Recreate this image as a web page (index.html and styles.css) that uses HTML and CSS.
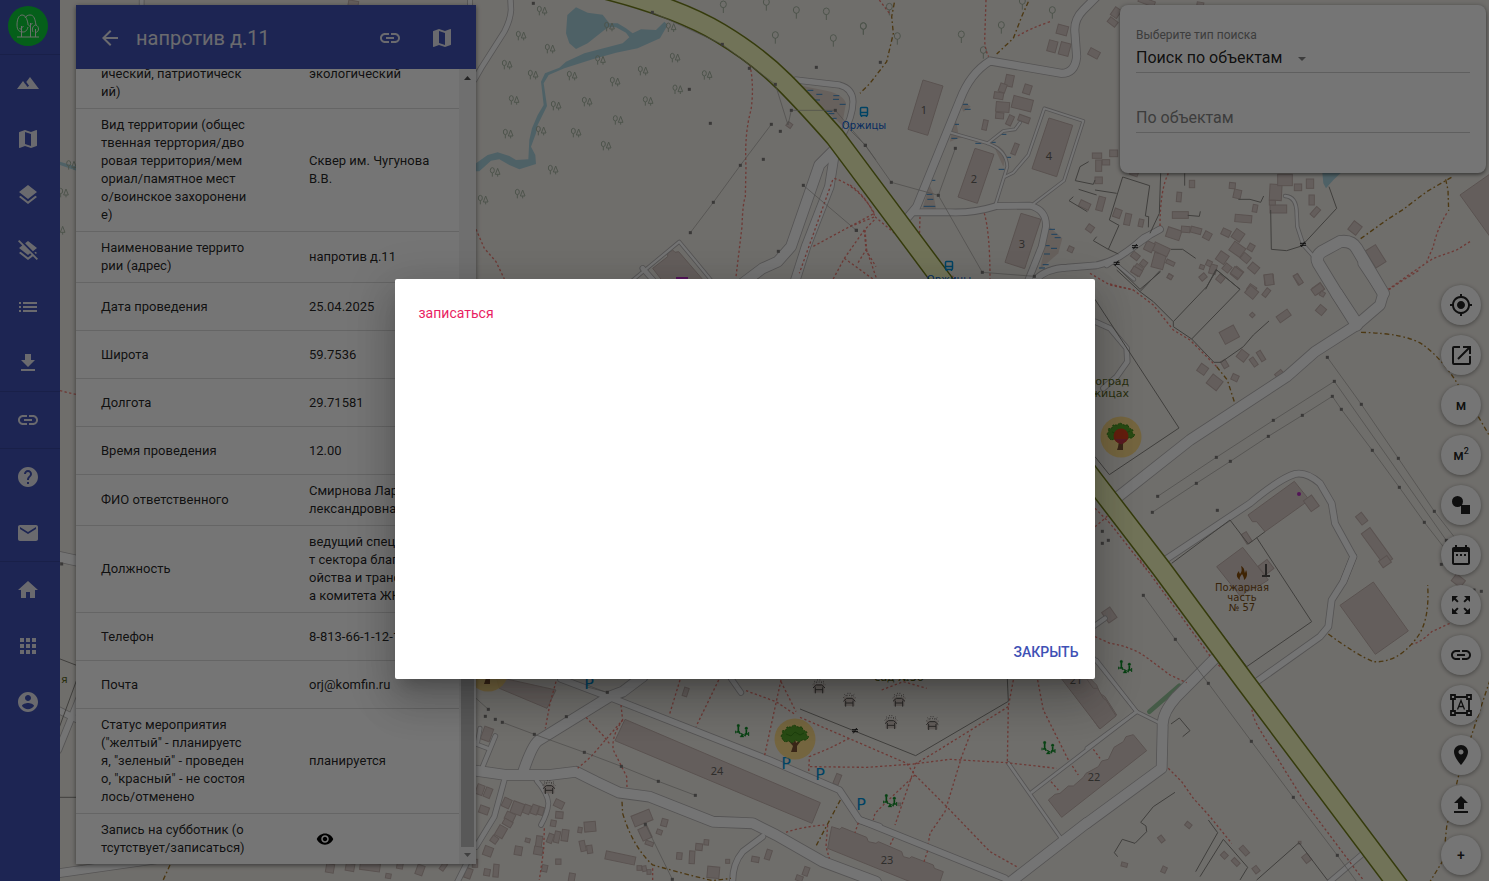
FILE: index.html
```html
<!DOCTYPE html>
<html lang="ru">
<head>
<meta charset="utf-8">
<title>Карта субботников</title>
<link rel="stylesheet" href="styles.css">
</head>
<body>
<svg class="sprite" aria-hidden="true">
  <symbol id="i-terrain" viewBox="0 0 24 24"><path d="M14 6l-3.75 5 2.85 3.8-1.6 1.2C9.81 13.75 7 10 7 10l-6 8h22L14 6z"/></symbol>
  <symbol id="i-map" viewBox="0 0 24 24"><path d="M20.5 3l-.16.03L15 5.1 9 3 3.36 4.9c-.21.07-.36.25-.36.48V20.5c0 .28.22.5.5.5l.16-.03L9 18.9l6 2.1 5.64-1.9c.21-.07.36-.25.36-.48V3.5c0-.28-.22-.5-.5-.5zM15 19l-6-2.11V5l6 2.11V19z"/></symbol>
  <symbol id="i-layers" viewBox="0 0 24 24"><path d="M11.99 18.54l-7.37-5.73L3 14.07l9 7 9-7-1.63-1.27-7.38 5.74zM12 16l7.36-5.73L21 9l-9-7-9 7 1.63 1.27L12 16z"/></symbol>
  <symbol id="i-layers-off" viewBox="0 0 24 24"><path d="M19.81 14.99l1.19-.92-1.43-1.43-1.19.92 1.43 1.43zm-.45-4.72L21 9l-9-7-2.91 2.27 7.87 7.88 2.4-1.88zM3.27 1L2 2.27l4.22 4.22L3 9l1.63 1.27L12 16l2.1-1.63 1.43 1.43L12 18.54l-7.37-5.73L3 14.07l9 7 4.95-3.85L20.73 21 22 19.73 3.27 1z"/></symbol>
  <symbol id="i-list" viewBox="0 0 24 24"><path d="M3 13h2v-2H3v2zm0 4h2v-2H3v2zm0-8h2V7H3v2zm4 4h14v-2H7v2zm0 4h14v-2H7v2zM7 7v2h14V7H7z"/></symbol>
  <symbol id="i-download" viewBox="0 0 24 24"><path d="M19 9h-4V3H9v6H5l7 7 7-7zM5 18v2h14v-2H5z"/></symbol>
  <symbol id="i-link" viewBox="0 0 24 24"><path d="M3.9 12c0-1.71 1.39-3.1 3.1-3.1h4V7H7c-2.76 0-5 2.24-5 5s2.24 5 5 5h4v-1.9H7c-1.71 0-3.1-1.39-3.1-3.1zM8 13h8v-2H8v2zm9-6h-4v1.9h4c1.71 0 3.1 1.39 3.1 3.1s-1.39 3.1-3.1 3.1h-4V17h4c2.76 0 5-2.24 5-5s-2.24-5-5-5z"/></symbol>
  <symbol id="i-help" viewBox="0 0 24 24"><path d="M12 2C6.48 2 2 6.48 2 12s4.48 10 10 10 10-4.48 10-10S17.52 2 12 2zm1 17h-2v-2h2v2zm2.07-7.75l-.9.92C13.45 12.9 13 13.5 13 15h-2v-.5c0-1.1.45-2.1 1.17-2.83l1.24-1.26c.37-.36.59-.86.59-1.41 0-1.1-.9-2-2-2s-2 .9-2 2H8c0-2.21 1.79-4 4-4s4 1.79 4 4c0 .88-.36 1.68-.93 2.25z"/></symbol>
  <symbol id="i-mail" viewBox="0 0 24 24"><path d="M20 4H4c-1.1 0-1.99.9-1.99 2L2 18c0 1.1.9 2 2 2h16c1.1 0 2-.9 2-2V6c0-1.1-.9-2-2-2zm0 4l-8 5-8-5V6l8 5 8-5v2z"/></symbol>
  <symbol id="i-home" viewBox="0 0 24 24"><path d="M10 20v-6h4v6h5v-8h3L12 3 2 12h3v8z"/></symbol>
  <symbol id="i-apps" viewBox="0 0 24 24"><path d="M4 8h4V4H4v4zm6 12h4v-4h-4v4zm-6 0h4v-4H4v4zm0-6h4v-4H4v4zm6 0h4v-4h-4v4zm6-10v4h4V4h-4zm-6 4h4V4h-4v4zm6 6h4v-4h-4v4zm0 6h4v-4h-4v4z"/></symbol>
  <symbol id="i-account" viewBox="0 0 24 24"><path d="M12 2C6.48 2 2 6.48 2 12s4.48 10 10 10 10-4.48 10-10S17.52 2 12 2zm0 3c1.66 0 3 1.34 3 3s-1.34 3-3 3-3-1.34-3-3 1.34-3 3-3zm0 14.2c-2.5 0-4.71-1.28-6-3.22.03-1.99 4-3.08 6-3.08 1.99 0 5.97 1.09 6 3.08-1.29 1.94-3.5 3.22-6 3.22z"/></symbol>
  <symbol id="i-back" viewBox="0 0 24 24"><path d="M20 11H7.83l5.59-5.59L12 4l-8 8 8 8 1.41-1.41L7.83 13H20v-2z"/></symbol>
  <symbol id="i-eye" viewBox="0 0 24 24"><path d="M12 4.5C7 4.5 2.73 7.61 1 12c1.73 4.39 6 7.5 11 7.5s9.27-3.11 11-7.5c-1.73-4.39-6-7.5-11-7.5zM12 17c-2.76 0-5-2.24-5-5s2.24-5 5-5 5 2.24 5 5-2.24 5-5 5zm0-8c-1.66 0-3 1.34-3 3s1.34 3 3 3 3-1.34 3-3-1.34-3-3-3z"/></symbol>
  <symbol id="i-locate" viewBox="0 0 24 24"><path d="M12 8c-2.21 0-4 1.79-4 4s1.79 4 4 4 4-1.79 4-4-1.79-4-4-4zm8.94 3c-.46-4.17-3.77-7.48-7.94-7.94V1h-2v2.06C6.83 3.52 3.52 6.83 3.06 11H1v2h2.06c.46 4.17 3.77 7.48 7.94 7.94V23h2v-2.06c4.17-.46 7.48-3.77 7.94-7.94H23v-2h-2.06zM12 19c-3.87 0-7-3.13-7-7s3.13-7 7-7 7 3.13 7 7-3.13 7-7 7z"/></symbol>
  <symbol id="i-open" viewBox="0 0 24 24"><path fill="none" stroke="currentColor" stroke-width="2" d="M11 4H5a1 1 0 0 0-1 1v15a1 1 0 0 0 1 1h15a1 1 0 0 0 1-1v-7M9 16L20 5M14 4h7v7"/></symbol>
  <symbol id="i-shapes" viewBox="0 0 24 24"><circle cx="8.500" cy="8.500" r="5.500"/><path d="M12 12h9v9h-9z"/></symbol>
  <symbol id="i-calendar" viewBox="0 0 24 24"><path fill-rule="evenodd" d="M6 2h2v2h8V2h2v2h1c1.100 0 2 .9 2 2v14c0 1.100-.9 2-2 2H5c-1.100 0-2-.9-2-2V6c0-1.100.9-2 2-2h1V2zM5 9v11h14V9H5zM7 11h2v2H7v-2zm4 0h2v2h-2v-2zm4 0h2v2h-2v-2z"/></symbol>
  <symbol id="i-expand" viewBox="0 0 24 24"><path d="M15 3l2.300 2.300-2.890 2.870 1.420 1.420L18.700 6.700 21 9V3h-6zM3 9l2.300-2.300 2.870 2.890 1.420-1.420L6.700 5.300 9 3H3v6zm6 12l-2.300-2.300 2.890-2.870-1.420-1.420L5.300 17.300 3 15v6h6zm12-6l-2.300 2.300-2.870-2.890-1.420 1.420 2.890 2.870L15 21h6v-6z"/></symbol>
  <symbol id="i-frame" viewBox="0 0 24 24"><path fill="none" stroke="currentColor" stroke-width="1.800" d="M2 2h4v4H2zM18 2h4v4h-4zM2 18h4v4H2zM18 18h4v4h-4zM6 4h12M6 20h12M4 6v12M20 6v12"/><path fill="none" stroke="currentColor" stroke-width="1.300" d="M8.500 16.500l3.500-9 3.500 9M9.700 13.500h4.600"/></symbol>
  <symbol id="i-place" viewBox="0 0 24 24"><path d="M12 2C8.130 2 5 5.130 5 9c0 5.250 7 13 7 13s7-7.750 7-13c0-3.870-3.130-7-7-7zm0 9.500c-1.380 0-2.500-1.120-2.500-2.500s1.120-2.500 2.500-2.500 2.500 1.120 2.500 2.500-1.120 2.500-2.500 2.500z"/></symbol>
  <symbol id="i-upload" viewBox="0 0 24 24"><path d="M9 16h6v-6h4l-7-7-7 7h4zm-4 2h14v2H5z"/></symbol>
</svg>

<main class="map">
  <svg id="map" class="map-canvas" viewBox="0 0 1489 881" preserveAspectRatio="xMidYMid slice" role="img" aria-label="Карта"></svg>
</main>

<nav class="rail" aria-label="Меню">
  <a class="logo" href="#" aria-label="Главная">
    <svg viewBox="0 0 40 40"><circle cx="20" cy="20" r="20" fill="#0ccf39"/><g fill="none" stroke="#e4f4e6" stroke-width="1"><path d="M9 31h22M13.500 31V20M13.500 24l-2-2M13.500 22l2-2M22.500 31V17M22.500 21l-3-3M22.500 19l2-2M27.500 31V23M20 21c-1 4-3 5-5 5-4 0-6-2-6-7 0-6 2-10 5-10 3 0 5 3 6 9M17 12c1-2 3-3 5-3 4 0 5 4 6 10M25 26c-1-2-1-6 2.500-7 4 1 4 7 0 7.500"/></g></svg>
  </a>
  <hr>
  <button aria-label="Рельеф"><svg class="icon"><use href="#i-terrain"/></svg></button>
  <button aria-label="Карта"><svg class="icon"><use href="#i-map"/></svg></button>
  <button aria-label="Слои"><svg class="icon"><use href="#i-layers"/></svg></button>
  <button aria-label="Скрыть слои"><svg class="icon"><use href="#i-layers-off"/></svg></button>
  <button aria-label="Список"><svg class="icon"><use href="#i-list"/></svg></button>
  <button aria-label="Скачать"><svg class="icon"><use href="#i-download"/></svg></button>
  <hr>
  <button aria-label="Ссылка"><svg class="icon"><use href="#i-link"/></svg></button>
  <hr>
  <button aria-label="Помощь"><svg class="icon"><use href="#i-help"/></svg></button>
  <button aria-label="Письмо"><svg class="icon"><use href="#i-mail"/></svg></button>
  <hr>
  <button aria-label="Домой"><svg class="icon"><use href="#i-home"/></svg></button>
  <button aria-label="Приложения"><svg class="icon"><use href="#i-apps"/></svg></button>
  <button aria-label="Профиль"><svg class="icon"><use href="#i-account"/></svg></button>
</nav>

<section class="panel">
  <header class="panel-head">
    <button aria-label="Назад"><svg class="icon"><use href="#i-back"/></svg></button>
    <h1>напротив д.11</h1>
    <button aria-label="Ссылка"><svg class="icon"><use href="#i-link"/></svg></button>
    <button aria-label="Показать на карте"><svg class="icon"><use href="#i-map"/></svg></button>
  </header>
  <div class="panel-body">
    <div class="panel-scroll">
      <table>
        <tbody>
          <tr><th>&nbsp;<br>ический, патриотическ<br>ий)</th><td>экологический</td></tr>
          <tr><th>Вид территории (общес<br>твенная терртория/дво<br>ровая территория/мем<br>ориал/памятное мест<br>о/воинское захоронени<br>е)</th><td>Сквер им. Чугунова<br>В.В.</td></tr>
          <tr><th>Наименование террито<br>рии (адрес)</th><td>напротив д.11</td></tr>
          <tr><th>Дата проведения</th><td>25.04.2025</td></tr>
          <tr><th>Широта</th><td>59.7536</td></tr>
          <tr><th>Долгота</th><td>29.71581</td></tr>
          <tr><th>Время проведения</th><td>12.00</td></tr>
          <tr><th>ФИО ответственного</th><td>Смирнова Лариса А<br>лександровна</td></tr>
          <tr><th>Должность</th><td>ведущий специалис<br>т сектора благоустр<br>ойства и транспорт<br>а комитета ЖКХ</td></tr>
          <tr><th>Телефон</th><td>8-813-66-1-12-10</td></tr>
          <tr><th>Почта</th><td>orj@komfin.ru</td></tr>
          <tr><th>Статус мероприятия<br>("желтый" - планируетс<br>я, "зеленый" - проведен<br>о, "красный" - не состоя<br>лось/отменено</th><td>планируется</td></tr>
          <tr><th>Запись на субботник (о<br>тсутствует/записаться)</th><td><button class="eye" aria-label="Открыть запись"><svg><use href="#i-eye"/></svg></button></td></tr>
        </tbody>
      </table>
    </div>
    <div class="scrollbar" aria-hidden="true">
      <svg viewBox="0 0 17 17"><path d="M5 11h7L8.500 7z" fill="#505050"/></svg>
      <span class="thumb"></span>
      <svg viewBox="0 0 17 17"><path d="M5 6h7L8.500 10z" fill="#8b8b8b"/></svg>
    </div>
  </div>
</section>

<form class="search">
  <label class="search-label" for="kind">Выберите тип поиска</label>
  <div class="field">
    <select id="kind"><option>Поиск по объектам</option></select>
    <svg class="caret" viewBox="0 0 8 4" aria-hidden="true"><path d="M0 0h8L4 4z"/></svg>
  </div>
  <input class="field query" type="text" placeholder="По объектам" aria-label="По объектам">
</form>

<div class="tools">
  <button type="button" aria-label="Моё местоположение"><svg class="icon"><use href="#i-locate"/></svg></button>
  <button type="button" aria-label="Открыть"><svg class="icon"><use href="#i-open"/></svg></button>
  <button type="button">м</button>
  <button type="button"><span>м<sup>2</sup></span></button>
  <button type="button" aria-label="Фигуры"><svg class="icon"><use href="#i-shapes"/></svg></button>
  <button type="button" aria-label="Календарь"><svg class="icon"><use href="#i-calendar"/></svg></button>
  <button type="button" aria-label="Развернуть"><svg class="icon"><use href="#i-expand"/></svg></button>
  <button type="button" aria-label="Ссылка"><svg class="icon"><use href="#i-link"/></svg></button>
  <button type="button" aria-label="Область"><svg class="icon"><use href="#i-frame"/></svg></button>
  <button type="button" aria-label="Метка"><svg class="icon"><use href="#i-place"/></svg></button>
  <button type="button" aria-label="Загрузить"><svg class="icon"><use href="#i-upload"/></svg></button>
  <button type="button">+</button>
</div>

<div class="scrim">
  <div class="dialog" role="dialog" aria-modal="true" aria-label="Запись">
    <a href="#">записаться</a>
    <div class="dialog-actions"><button>Закрыть</button></div>
  </div>
</div>
<script src="map.js"></script>
</body>
</html>
```

FILE: styles.css
```css
* { box-sizing: border-box; }

html, body { height: 100%; }

body {
  margin: 0;
  overflow: hidden;
  font-family: Roboto, sans-serif;
  font-size: 13px;
  color: rgba(0, 0, 0, 0.87);
}

button, input, select { font: inherit; color: inherit; }

button {
  border: 0;
  padding: 0;
  background: none;
  cursor: pointer;
}

.sprite { display: none; }

.icon {
  display: block;
  width: 24px;
  height: 24px;
  fill: currentColor;
}

/* Map */
.map {
  position: fixed;
  inset: 0;
  background: #f2efe9;
}

.map-canvas { display: block; width: 100%; height: 100%; }
.water { fill: #aad3df; }
.wet { fill: #e0d3ca; }
.wetline { stroke: #3f8fd0; stroke-width: 3; fill: none; }
.building { fill: #dacdc9; stroke: #c3b3ae; stroke-width: 3; }
.case { fill: none; stroke: #b9b7b7; stroke-linecap: round; stroke-linejoin: round; }
.road { fill: none; stroke: #fcfcfc; stroke-linecap: round; stroke-linejoin: round; }
.foot { fill: none; stroke: #ee7f76; stroke-width: 4; stroke-dasharray: 7 7; }
.track { fill: none; stroke: #a67a28; stroke-width: 4; stroke-dasharray: 14 8 5 8; }
.wire { fill: none; stroke: #a5a39f; stroke-width: 2; }
.fence { fill: none; stroke: #8b8984; stroke-width: 3; }
.node { fill: #7e7c7b; }
.hedge { fill: none; stroke: #96c79c; stroke-width: 14; stroke-linecap: round; }
.trees { fill: none; stroke: #a9b7a5; stroke-width: 3; }
.highway-case { fill: none; stroke: #75821c; stroke-width: 21; }
.highway { fill: none; stroke: #f7fabf; stroke-width: 18; }
.number { font: 11px "Noto Sans", sans-serif; fill: #686461; text-anchor: middle; }
.stop { font: 10px "DejaVu Sans", sans-serif; fill: #0a5fd0; text-anchor: middle; }
.place { font: 11px "DejaVu Sans", sans-serif; fill: #59661c; }
.station { font: 10px "DejaVu Sans", sans-serif; fill: #7a4d14; text-anchor: middle; }
.parking { font: 16px "DejaVu Sans", sans-serif; fill: #0092da; text-anchor: middle; }

/* Left rail */
.rail {
  position: fixed;
  inset: 0 auto 0 0;
  width: 60px;
  background: #3f51b5;
  color: #e8e8f0;
}

.rail hr {
  height: 1px;
  margin: 0;
  border: 0;
  background: #3747a0;
}

.logo { display: block; height: 54px; padding: 6px 8px; }
.logo svg { display: block; width: 40px; height: 40px; }
.rail button { display: block; width: 100%; height: 56px; padding: 16px; }

/* Object card */
.panel {
  position: fixed;
  top: 5px;
  bottom: 17px;
  left: 76px;
  width: 400px;
  display: flex;
  flex-direction: column;
  background: #fff;
  box-shadow: 0 1px 5px rgba(0, 0, 0, 0.3), 0 2px 4px rgba(0, 0, 0, 0.2);
}

.panel-head {
  display: flex;
  align-items: center;
  flex: 0 0 64px;
  gap: 28px;
  padding: 2px 22px 0;
  background: #3f51b5;
  color: #e8e8f0;
}

.panel-head h1 {
  flex: 1;
  margin: 0 0 0 -14px;
  font-size: 20px;
  font-weight: 400;
}

.panel-body { display: flex; flex: 1; min-height: 0; }

.panel-scroll {
  flex: 1;
  display: flex;
  flex-direction: column;
  justify-content: flex-end;
  overflow: hidden;
}

.panel table {
  width: 100%;
  table-layout: fixed;
  border-collapse: separate;
  border-spacing: 0;
  line-height: 18px;
}

.panel tr { height: 48px; }

.panel th, .panel td {
  padding: 7px 0 7px 25px;
  border-bottom: 1px solid #dcdcdc;
  text-align: left;
  font-weight: 400;
  vertical-align: middle;
  white-space: nowrap;
}

.panel th { width: 208px; }
.panel tr:last-child > * { border-bottom: 0; }

.eye { display: block; padding: 0 7px; }
.eye svg { display: block; width: 18px; height: 18px; }

.scrollbar {
  flex: 0 0 17px;
  display: flex;
  flex-direction: column;
  background: #f1f1f1;
}

.scrollbar svg { width: 17px; height: 17px; }
.thumb { flex: 1; margin: 200px 2px 0; background: #c1c1c1; }

/* Search card */
.search {
  position: fixed;
  top: 5px;
  right: 3px;
  width: 366px;
  padding: 22px 16px 40px;
  border-radius: 8px;
  background: #fff;
  box-shadow: 0 1px 5px rgba(0, 0, 0, 0.4), 0 2px 3px rgba(0, 0, 0, 0.2);
}

.search-label {
  display: block;
  font-size: 12px;
  line-height: 16px;
  color: #858585;
}

.field {
  display: flex;
  align-items: center;
  gap: 15px;
  height: 30px;
  border: 0;
  border-bottom: 1px solid #d0d0d0;
  font-size: 16px;
}

.field select {
  appearance: none;
  border: 0;
  padding: 0;
  background: none;
}

.caret { width: 8px; height: 4px; margin-top: 2px; fill: #858585; }
.query { width: 100%; margin-top: 30px; padding: 0; background: none; }
.query::placeholder { color: #858585; opacity: 1; }

/* Round map tools */
.tools {
  position: fixed;
  top: 285px;
  right: 8px;
  display: grid;
  gap: 10px;
}

.tools button {
  display: grid;
  place-items: center;
  width: 40px;
  height: 40px;
  border-radius: 50%;
  background: #fff;
  box-shadow: 0 1px 4px rgba(0, 0, 0, 0.4);
  font-size: 14px;
  font-weight: 500;
}

.tools sup { font-size: 9px; line-height: 0; }

/* Dialog */
.scrim {
  position: fixed;
  inset: 0;
  display: flex;
  align-items: center;
  justify-content: center;
  padding-top: 77px;
  background: rgba(0, 0, 0, 0.54);
}

.dialog {
  display: flex;
  flex-direction: column;
  justify-content: space-between;
  width: 700px;
  height: 400px;
  padding: 24px 8px 8px 24px;
  border-radius: 2px;
  background: #fff;
  box-shadow: 0 11px 15px -7px rgba(0, 0, 0, 0.2), 0 24px 38px 3px rgba(0, 0, 0, 0.14), 0 9px 46px 8px rgba(0, 0, 0, 0.12);
}

.dialog a {
  align-self: flex-start;
  font-size: 14px;
  line-height: 20px;
  color: #e91e63;
  text-decoration: none;
}

.dialog-actions { display: flex; justify-content: flex-end; }

.dialog-actions button {
  height: 38px;
  padding: 0 8px;
  font-size: 14px;
  font-weight: 500;
  text-transform: uppercase;
  color: #3f51b5;
}
```

FILE: map.js
```js
// Tiles hold their shapes in local units of a third of a pixel.
// roads: [width, path]; rects: cx,cy,w,h,angle; nodes, dashes, pairs, singles: x,y lists.
const tiles = [
  {
    x: 476, y: 0,
    water: ["M300 22L335 38 380 44 400 70 425 70 450 85 470 100 495 88 540 90 565 65 575 75 552 115 485 145 420 158 350 178 265 205 218 225 203 250 213 318 185 375 180 400 165 440 178 465 180 492 130 508 100 495 70 478 45 482 10 514 0 514 0 490 35 465 65 457 100 468 120 480 157 478 160 420 168 385 185 345 203 315 195 245 207 220 250 203 270 185 325 160 440 130 460 112 450 98 420 82 400 82 385 90 335 130 300 147 280 130 270 100 274 45Z"],
    wet: ["M965 255L1040 270Q1100 280 1110 310L1098 375 1075 355Z"],
    dashes: "1003,271 1030,283 1023,300 1081,287 1100,313 1080,298 1060,334 1066,341 1073,355",
    roads: [[14, "M103 -10L105 30Q103 60 85 95L15 205 -5 240"], [16, "M960 240L1090 255Q1130 265 1131 305Q1130 350 1100 405"],
      [30, "M1075 450L1030 495 945 740 905 785 860 805 800 850"], [26, "M1075 465L1060 560 990 740 955 850"],
      [7, "M465 845L610 725 705 840"], [14, "M500 805L540 850"]],
    polys: ["530,805 575,770 575,760 590,750 597,757 608,755 690,850 565,850"],
    rects: "940,375,16,14,35",
    foot: ["M822 195Q835 260 825 330Q805 400 810 500L808 590Q800 610 798 680L780 830", "M0 688L25 745 60 785 85 837", "M1075 535Q1150 560 1195 640L1010 740", "M1195 660L1165 690 1105 775 1070 840", "M1165 690L1170 750 1145 790", "M1105 775L1195 840", "M1170 750L1200 800", "M1070 540L970 820"],
    wire: ["M643 698L712 607 793 496 886 373", "M898 253L936 375 946 331 1078 331 1168 436 1200 480", "M982 556L1141 691", "M529 37L739 133 898 253"],
    nodes: "172,10 529,37 739,133 820,205 898,253 1021,202 640,268 703,370 946,331 1078,331 886,373 913,394 862,478 793,496 712,607 643,698 982,556 1141,691 907,754 1168,436",
    pairs: "198,32 135,107 222,146 93,194 171,224 288,227 373,180 400,80 585,82 417,245 501,212 597,173 693,225 114,300 240,317 333,305 516,303 426,360 96,401 195,392 300,398 390,437 57,516 231,509 132,581 21,599 605,268",
    singles: "742,15 871,8 961,32 1051,36 1162,80 898,107 1072,116"
  },
  {
    x: 850, y: 0,
    wet: ["M330 312L350 310 362 320 340 335Z", "M318 360L325 400 355 410 325 415 300 425 305 395Z", "M238 555L250 580 258 628 218 625Z", "M430 435Q460 440 468 465L460 500Z", "M598 680L637 715 625 760 570 808Z"],
    dashes: "345,313 353,328 318,373 313,415 385,430 428,427 460,403 247,541 241,598 230,619 247,619 238,583 455,508 474,472 606,688 613,703 623,713 590,737 612,745 591,762 587,794 576,804",
    roads: [[22, "M750 -20L700 30Q670 60 675 100L680 170Q675 220 635 220L420 183Q360 220 330 300L200 620 175 650"],
      [18, "M190 637L300 637Q370 640 440 618L540 617Q590 630 588 680L575 740 535 840"], [18, "M555 840Q590 805 650 803L740 796Q790 785 830 755L900 705 930 688"],
      [6, "M303 398L413 430Q470 450 472 500L436 615"], [6, "M413 430L460 393 495 388 510 368"], [6, "M466 530L490 518 535 465 583 325 700 363 642 542 550 612"]],
    polys: ["219,240 279,258 233,406 174,388", "375,445 432,463 382,610 324,591", "597,354 668,376 620,530 546,506", "513,640 573,658 524,806 465,787"],
    rects: "637,90,32,28,15 607,139,26,34,15 644,147,30,38,15 732,160,32,22,28 798,38,22,28,35 788,66,28,18,38 478,242,24,34,12 458,264,20,26,20 446,287,28,20,10 458,321,40,30,5 449,347,24,18,5 532,268,22,28,18 517,311,60,36,14 480,361,16,30,25 522,357,34,18,20 405,375,14,30,12 495,447,14,34,22 741,467,28,16,0 746,497,18,34,0 768,487,22,16,0 791,460,24,20,0 746,541,22,20,0 752,611,20,42,15 704,615,32,20,25 720,685,20,20,35 662,748,16,16,25 852,520,24,14,20",
    foot: ["M408 0L404 120Q405 150 416 170", "M600 65Q540 85 500 110", "M88 0L122 45", "M0 555Q50 590 75 650L0 680", "M75 650L240 790 310 830", "M210 650L208 720 290 810", "M403 640Q420 700 420 837", "M955 520Q930 570 930 680", "M45 690L50 750 80 837"],
    track: ["M133 8L125 50 130 100 110 185 60 250 30 280", "M535 5L515 50 490 115 440 162"],
    wire: ["M0 390L46 436 124 547 265 586 316 445", "M265 586L397 817 553 829"],
    fence: ["M716 485L690 500 676 542 730 553 735 540", "M735 570L800 580", "M686 568L740 585", "M670 590L657 602 712 635", "M818 531L899 557 886 648 896 650 895 682", "M818 531L778 660 807 676 775 748 730 722 740 710", "M775 748L805 762", "M932 520L928 640 900 700"],
    nodes: "91,187 46,436 124,547 265,586 316,445 397,817 553,829 19,691",
    singles: "118,22 40,80 142,110 334,105 400,152 454,77 517,5 607,32"
  },
  {
    x: 1110, y: 0,
    water: ["M637 518L693 518 670 540 648 565 640 550Z"],
    roads: [[14, "M-10 795L50 755 100 712 150 687"], [8, "M525 588Q560 590 560 640L562 680 580 735 620 780"], [34, "M740 970L680 880 625 790Q615 770 635 755L690 725Q725 720 740 745L820 880"], [8, "M15 790L72 838"]],
    polys: ["1050,585 1140,522 1140,710"],
    rects: "497,577,36,48,3 525,540,44,34,0 564,562,22,20,0 600,551,22,28,0 605,600,16,30,0 505,627,50,24,0 487,608,18,14,0 616,636,16,30,42 246,552,16,22,0 207,591,14,28,5 367,557,18,18,5 382,582,22,26,12 435,625,14,22,10 400,656,50,22,5 211,645,48,20,0 191,701,42,30,18 227,688,26,18,5 258,691,32,18,15 292,707,22,22,28 348,698,26,20,25 384,706,30,30,35 382,748,40,32,35 423,742,18,20,30 337,773,30,30,35 407,774,26,22,40 351,804,22,22,40 381,819,28,30,40 431,804,28,24,40 309,808,20,28,15 297,790,16,16,25 276,801,14,12,20 331,836,20,20,40 279,831,20,16,-40 477,839,28,30,-5 564,838,16,32,-30 180,830,14,14,30 181,788,26,12,25 146,783,36,44,15 153,748,50,26,25 118,740,26,28,25 82,810,26,30,38 76,768,24,18,38 101,790,18,18,38 735,684,30,32,38 797,769,36,60,-32 22,640,22,26,20 53,658,18,34,12 93,669,14,22,12 110,5,50,16,20 271,12,20,10,10 425,866,24,20,35 625,866,30,24,-35",
    foot: ["M1010 640Q980 690 970 740L950 785", "M1080 725L1040 750 970 775 910 815 835 868", "M0 852L70 870"],
    track: ["M752 716L830 660 880 628 950 575 1028 530", "M1007 538L1014 570 1016 632"],
    fence: ["M224 520V557", "M385 598L420 598 452 607 461 588", "M233 646L268 649 271 634", "M183 748L218 748 257 775", "M482 630L484 748 530 752 575 738 680 625 657 560", "M287 868L318 808 390 868", "M20 800L90 868 152 815"],
    gates: "75,740 20,790 579,733"
  },
  {
    x: 1090, y: 270,
    roads: [[34, "M740 70L800 165"], [30, "M820 -20L880 70 870 105 800 165 675 245 590 320 300 510 85 680"], [14, "M15 155L60 175 110 235 112 275 80 320 40 355"], [18, "M225 870L480 700Q570 625 615 612Q650 605 690 640L725 700 735 760 790 860 760 935"]],
    polys: ["613,634 658,690 525,785 500,755 487,755 474,735"],
    rects: "537,29,26,32,-8 485,67,32,28,40 529,68,14,26,38 487,135,12,12,45 581,138,40,22,-35 418,194,48,40,-28 458,257,28,28,38 404,282,16,24,-30 491,276,14,28,-35 513,258,14,32,-32 338,298,26,26,35 374,337,38,34,38 435,323,20,18,25 568,312,24,16,-40 625,28,14,32,-35 683,58,34,22,-35 693,120,24,24,40 697,72,14,14,30 240,20,14,12,30 440,8,30,24,35 140,4,30,20,30 664,700,30,40,-36 470,804,18,34,-32 815,746,22,32,-38 861,829,32,116,-36",
    foot: ["M0 10L60 45 130 60 190 105 250 180 300 210 380 290", "M985 2L940 30 895 60", "M15 715L60 760 170 900", "M15 770L45 745 60 730"],
    track: ["M380 290L412 330 435 402", "M813 187Q950 190 1000 225Q1060 270 1105 345", "M1165 440L1200 500"],
    wire: ["M203 679L379 562 550 451 733 334 1069 811", "M187 727L319 640 421 574 535 499 637 436 727 379 754 418 847 541 928 652 1003 757 1060 830", "M712 262L814 403 925 565 1033 724 1100 810"],
    fence: ["M15 88L267 474 58 614 15 560", "M210 2L150 65 80 0", "M150 65L190 95 250 155 350 50 380 0 450 58 305 207 250 170 250 155", "M305 207L372 277 393 277 460 230 490 195 537 153", "M245 880L420 750 475 822 525 785", "M500 803L665 1055 470 1190"],
    nodes: "712,262 733,334 727,379 754,418 814,403 550,451 637,436 535,499 379,562 421,574 319,640 203,679 187,727 382,721 847,541 925,565 928,652 1003,757 1033,724 1069,811 1054,883 37,784 55,811 37,820"
  },
  {
    x: 1090, y: 560,
    roads: [[30, "M375 295L260 410Q215 460 218 500L215 625 -10 790"], [8, "M0 280L140 455 205 487"], [8, "M140 455L-10 565"], [14, "M820 880L720 965"], [12, "M10 200L45 175"], [18, "M790 -10L760 65 725 120 715 200 690 230 500 365"]],
    polys: ["850,66 955,213 856,283 750,136", "380,20 458,-38 535,60 495,85 470,95 452,110", "0,355 20,375 30,400 45,410 80,465 28,506 -60,380"],
    rects: "528,22,34,34,-38 1105,62,34,26,38 885,5,30,24,-35 58,165,30,38,-35 295,795,18,14,38 214,837,14,20,-38 103,914,18,12,15 222,929,14,18,25 463,872,16,30,-42 403,886,16,18,-45 437,906,14,24,-45 498,929,16,20,-38 650,895,20,24,-38 629,848,8,8,0",
    hedge: ["M178 455L268 377"],
    foot: ["M150 0L360 288", "M385 315L415 340", "M485 435Q485 470 510 510L640 720 820 960", "M15 230L60 250Q130 260 180 300L240 345 290 368", "M235 625L275 665 310 715 360 770 425 850", "M963 253Q990 250 1025 215L1080 190"],
    track: ["M715 222Q800 285 850 305Q920 310 975 240Q1020 190 1013 75", "M1200 360L1160 480 1140 540 1105 650 1070 800 1060 900 1020 965"],
    wire: ["M160 106L256 238 355 370 484 544 610 712 742 886 800 965"],
    fence: ["M235 10L470 320", "M243 492L268 474 300 512 278 530", "M255 697L190 740 152 787 168 798 170 815 135 850 97 838 73 878 83 890", "M355 780L383 818 317 935", "M330 950L400 838 473 922 450 960", "M500 960L627 848 712 960"],
    nodes: "160,106 256,238 355,370 484,544 610,712 742,886 1152,90 1174,94",
    play: "105,320"
  },
  {
    x: 476, y: 660,
    roads: [[30, "M500 50L440 95 400 110 190 240Q170 250 140 340"], [18, "M255 57L410 115 880 300 1090 390 1150 480 1210 500"], [30, "M-15 330L90 345 220 345 300 335 360 365 430 398 520 410 710 485 830 490 900 525 1040 605 1200 665"], [12, "M20 320L58 228"], [10, "M-5 250L35 265"], [10, "M12 205L5 245"], [14, "M85 360L55 470 0 560"], [12, "M182 362Q215 400 217 430Q215 460 195 495"], [16, "M860 530L800 575Q770 610 770 665"], [14, "M765 55L795 98"]],
    polys: ["447,178 1033,428 1008,490 417,242", "60,50 240,90 213,145 70,85"],
    rects: "33,222,28,40,20 629,96,14,26,18 12,389,22,30,20 36,398,20,30,22 24,450,28,22,20 92,429,24,28,25 124,445,34,36,20 153,448,20,26,20 176,449,20,28,20 195,453,16,24,15 102,470,28,24,25 95,489,28,18,30 75,515,26,34,30 55,539,20,20,35 249,432,28,22,25 250,465,22,20,5 232,490,16,18,10 312,510,12,16,8 342,500,34,30,-5 223,535,16,28,20 243,531,16,34,12 267,526,20,34,8 155,541,14,12,15 189,545,18,34,8 187,572,26,24,10 127,572,22,26,10 320,558,16,32,-12 341,568,16,24,-8 36,574,26,28,20 60,632,16,38,5 33,637,18,20,10 206,625,16,20,12 247,605,16,16,0 287,655,18,30,10 433,594,90,24,12 490,624,14,14,0 505,626,12,16,-10 519,636,12,14,0 498,474,58,34,-22 507,520,30,38,-25 520,550,24,12,20 565,488,18,22,15 550,516,16,14,20 610,588,16,20,5 648,592,16,38,3 669,561,20,20,5 691,547,14,16,5 712,637,36,34,5 755,604,12,12,0 838,598,22,16,10 877,584,16,30,18 990,634,16,26,20 970,655,20,16,20 1084,358,16,32,22",
    foot: ["M240 65L222 130 208 205", "M612 60L580 165", "M728 60L660 200", "M435 135L440 180 345 290 305 325", "M330 172L380 225 400 250", "M440 180Q405 230 412 270L452 350 453 385", "M205 505L203 570 190 660", "M915 60L865 290", "M810 92L900 125 960 165", "M915 65L960 155", "M1120 235L1060 265 1000 290 998 340", "M930 517Q980 500 1045 495", "M1055 495L1050 560 1060 595", "M530 625V660"],
    track: ["M438 425L440 460Q470 560 530 615L640 645 710 662 765 655", "M1093 420L1040 520 1018 562"],
    wire: ["M0 115L37 148", "M79 187L175 223 325 277 436 319 547 364 658 406", "M330 80L394 97", "M508 493L589 658"],
    nodes: "37,148 28,169 58,178 79,187 175,223 271,170 394,97 325,277 436,319 547,364 658,406 508,493 589,658",
    play: "798,212", huts: "219,382", gates: "1137,212"
  },
  {
    x: 800, y: 660,
    roads: [[18, "M180 480L615 655"], [30, "M620 675L860 489"], [8, "M890 0L1010 155"], [8, "M1010 155L695 397"], [8, "M625 310L783 535"]],
    polys: ["785,57 860,57 880,85 893,85 910,115 918,120 948,168 900,207", "745,420 765,403 780,400 805,378 820,378 850,352 858,340 895,320 905,303 925,298 942,262 970,245 978,230 1000,224 1040,272 785,472", "95,500 120,508 125,502 200,532 205,545 228,550 235,545 305,575 310,590 328,595 335,590 400,615 403,625 430,635 420,665 330,665 83,565"],
    rects: "298,433,8,8,0",
    foot: ["M640 60L625 140 622 305", "M713 60L730 150 805 300", "M625 140L400 280 340 315", "M0 172L320 310 345 345 440 440 570 575 650 620", "M30 320L200 322 340 312 450 298 620 308 770 325", "M510 225L485 290 435 455 390 520 385 550", "M345 345L255 430 225 460 220 480", "M345 320L285 495", "M880 268L900 295", "M817 318L835 345", "M753 365L775 390", "M175 488L165 518", "M280 535L268 560", "M383 572L372 605", "M245 90L310 65 380 85"],
    fence: ["M0 147L347 287 625 124 622 57"],
    play: "270,422 745,263", huts: "57,80 148,120 297,120 273,187 397,190"
  },
  {
    x: 60, y: 0,
    water: ["M0 485L50 500 50 512 0 495Z"],
    roads: [[12, "M245 -10V20"], [12, "M1230 -10V20"], [30, "M-5 1670L50 1682"], [18, "M60 2090L-5 2250"], [18, "M-5 2130L55 2160"], [24, "M-5 2620L380 2565 430 2575"], [14, "M1190 2650L1220 2590"]],
    rects: "880,10,30,16,10 810,2605,24,26,10 870,2602,26,22,10 930,2600,60,24,8 985,2628,16,14,10 1080,2610,22,30,20 1150,2600,14,24,35 1020,2595,18,22,10 1225,2620,20,30,20 1245,2590,16,24,0",
    foot: ["M0 1172L50 1184"],
    track: ["M330 2595L305 2650"],
    fence: ["M-5 1975L60 2000", "M50 2040L-5 2190", "M-5 2392H60"],
    nodes: "5,1692",
    pairs: "34,495 10,578 0,690"
  }
];

const q = s => (s ? s.split(" ").map(p => p.split(",").map(Number)) : []);
const paths = (list, cls) => (list || []).map(d => `<path class="${cls}" d="${d}"/>`).join("");

const treePair = ([x, y]) => `<path d="M${x - 8} ${y + 14}V${y + 3}M${x + 8} ${y + 14}V${y + 7}M${x + 1} ${y + 7}l7-18 7 18z"/><ellipse cx="${x - 8}" cy="${y - 5}" rx="6" ry="8"/>`;
const treeSingle = ([x, y]) => `<path d="M${x} ${y + 24}V${y + 7}"/><ellipse cx="${x}" cy="${y - 2}" rx="9" ry="10"/>`;
const gate = ([x, y]) => `<path fill="none" stroke="#222" stroke-width="3" d="M${x - 9} ${y - 3}h18M${x - 9} ${y + 3}h18M${x - 5} ${y + 8}l10-16"/>`;
const playground = ([x, y]) => `<g transform="translate(${x} ${y})" fill="#0f8f28" stroke="#0f8f28"><circle cx="-11" cy="-15" r="4"/><circle cx="13" cy="-7" r="4"/><path stroke-width="5" fill="none" d="M-11-11v13M13-3v12M-17 4h10M8 10h12"/><path stroke-width="3" fill="none" d="M-19 0v8M-8 2v8M20 4v12M10 10v7M-8 6l18 9"/><path d="M0 9l6 10h-12z"/></g>`;
const hut = ([x, y]) => `<g transform="translate(${x} ${y})" fill="none"><path fill="#d6cac5" d="M-16-8h32v26h-32z"/><path stroke="#55524f" stroke-width="3" d="M-18 4L-8-5H8L18 4M-11 20V2M11 20V2M-11 9h22"/><path stroke="#857f7a" stroke-width="3" stroke-dasharray="3 4" d="M-19-6L-10-14H10L19-6M-15-17L-6-11M15-17L6-11M-6-20h14"/></g>`;

const layers = [
  t => paths(t.water, "water") + paths(t.wet, "wet") + paths(t.hedge, "hedge"),
  t => `<g class="trees">${q(t.pairs).map(treePair).join("")}${q(t.singles).map(treeSingle).join("")}</g>`,
  t => `<path class="wetline" d="${q(t.dashes).map(([x, y]) => `M${x - 9} ${y}h18`).join("")}"/>`,
  t => (t.polys || []).map(p => `<polygon class="building" points="${p}"/>`).join("") + q(t.rects).map(([x, y, w, h, a]) => `<rect class="building" x="${x - w / 2}" y="${y - h / 2}" width="${w}" height="${h}" transform="rotate(${a} ${x} ${y})"/>`).join(""),
  t => (t.roads || []).map(([w, d]) => `<path class="case" stroke-width="${w + 5}" d="${d}"/>`).join(""),
  t => (t.roads || []).map(([w, d]) => `<path class="road" stroke-width="${w}" d="${d}"/>`).join(""),
  t => paths(t.foot, "foot") + paths(t.track, "track") + paths(t.fence, "fence"),
  null,
  t => paths(t.wire, "wire") + q(t.nodes).map(([x, y]) => `<rect class="node" x="${x - 4.5}" y="${y - 4.5}" width="9" height="9"/>`).join("") +
    q(t.gates).map(gate).join("") + q(t.play).map(playground).join("") + q(t.huts).map(hut).join("")
];

const highway = "M600 -12C640 -2 685 12 720 33C745 48 768 66 784 82C800 98 820 120 835 137L850 157 941 279 1095 482 1161 568 1246 683 1400 888";

const crown = "M-14-3l2-3-1-2 4-1 1-3 4 0 3-2 4 2 4 0 1 3 4 2-1 3 3 2-3 3-4 0-3 2-3-2-4 3-3-2-4 1-2-2z";
const badge = (x, y, red) => `<g transform="translate(${x} ${y})"><circle r="20.500" fill="#ffd878" opacity=".85"/><path fill="#7a5233" d="M-4 13l2-6-7-8 7 5 2-5 1 5 7-5-6 8v6z"/><path fill="#58a32c" stroke="#3f8a1e" stroke-dasharray="2 1" d="${crown}"/><path fill="none" stroke="#3f8a1e" d="M-9-5l5 2 4-4 5 3 4-2"/>${red ? '<circle cy="-1" r="7.500" fill="#d9431f"/><path d="M-7 2h14l-7 6z" fill="#c23a4a"/><path stroke="#7a5233" stroke-width="3" d="M-1 7v6"/>' : ""}</g>`;
const bus = (x, y) => `<g transform="translate(${x} ${y})" fill="none" stroke="#0092da"><rect x="-3.500" y="-4.500" width="7" height="8" rx="1" stroke-width="1.500"/><path stroke-width="1.500" d="M-3 .5h6M-2.500 3v2M2.500 3v2"/></g>`;
const label = (cls, x, y, s) => `<text class="${cls}" x="${x}" y="${y}">${s}</text>`;

const extras =
  bus(864, 112) + bus(949, 266) +
  label("stop", 864, 129, "Оржицы") + label("stop", 949, 283, "Оржицы") +
  label("number", 924, 114, "1") + label("number", 974, 183, "2") + label("number", 1022, 248, "3") + label("number", 1049, 160, "4") +
  label("number", 717, 775, "24") + label("number", 887, 864, "23") + label("number", 1094, 781, "22") + label("number", 1076, 684, "21") +
  `<text class="place" x="1129" y="385" text-anchor="end">Виноград</text><text class="place" x="1129" y="397" text-anchor="end">в Оржицах</text>` +
  label("place", 61, 683, "я") + `<text class="place" x="899" y="681" text-anchor="middle">сад №36</text>` +
  label("station", 1242, 591, "Пожарная") + label("station", 1242, 601, "часть") + label("station", 1242, 611, "№ 57") +
  [[589, 689], [786, 769], [820, 780], [861, 810]].map(([x, y]) => label("parking", x, y, "P")).join("") +
  `<path fill="#8a4f0a" d="M1240 580c-4-3-4-6-1-9 0 2 1 2 1 3 2-2 2-5 1-8 4 2 3 5 4 7l1-3c2 4 1 8-2 10 0-3-1-4-2-6-1 2-3 3-2 6z"/>` +
  `<path stroke="#55524f" stroke-width="2" fill="none" d="M1266 564v11M1262 576h8"/>` +
  `<circle cx="1299" cy="494" r="2" fill="#b52fc0"/><path d="M676 278h12" stroke="#b52fc0" stroke-width="2"/>` +
  badge(1121, 437, true) + badge(795, 739) + badge(488, 671);

document.getElementById("map").innerHTML = layers.map(layer => layer
  ? tiles.map(t => `<g transform="translate(${t.x} ${t.y}) scale(.33333)">${layer(t)}</g>`).join("")
  : `<path class="highway-case" d="${highway}"/><path class="highway" d="${highway}"/>`).join("") + extras;
```
